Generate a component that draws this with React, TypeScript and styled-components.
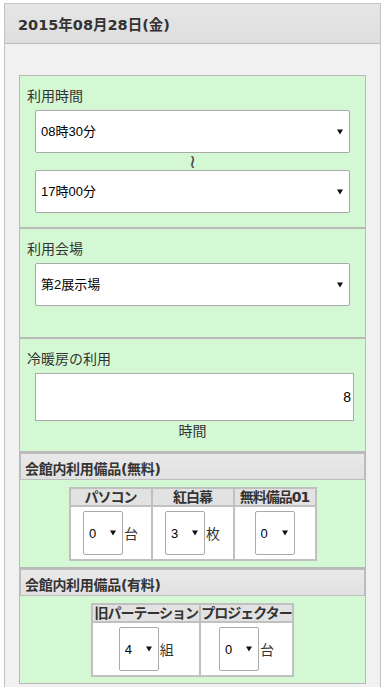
import React from "react";
import styled, { createGlobalStyle } from "styled-components";

const GlobalStyle = createGlobalStyle`
  html, body { margin: 0; padding: 0; background: #ffffff; }
  body { font-family: "Noto Sans CJK JP", "Noto Sans", sans-serif; color: #333; }
  * { box-sizing: border-box; }
`;

const Panel = styled.div`
  margin: 3px 3px 0 4px;
  border: 1px solid #c3c3c3;
  background: #f1f1f1;
`;

const PanelHeader = styled.div`
  height: 40px;
  display: flex;
  align-items: center;
  padding-left: 13px;
  background: linear-gradient(#e6e6e6, #dedede);
  border-bottom: 1px solid #bdbdbd;
  font-family: "DejaVu Sans", "Noto Sans CJK JP", sans-serif;
  font-weight: bold;
  font-size: 14.5px;
  color: #333;
`;

const PanelBody = styled.div`
  padding: 31px 14px 14px;
`;

const Section = styled.section<{ $pb?: number }>`
  border: 1px solid #b9b9b9;
  background: #d4f8d3;
  padding: 9px 7px ${(p) => p.$pb ?? 14}px;
`;

const Label = styled.div`
  font-size: 14px;
  line-height: 20px;
  color: #333;
  margin-bottom: 5px;
`;

const SelectWrap = styled.div<{ $w?: number }>`
  position: relative;
  margin: 0 8px;
  ${(p) => (p.$w ? `width: ${p.$w}px; flex: 0 0 ${p.$w}px; margin: 0;` : "")}
`;

const Select = styled.select<{ $h?: number }>`
  appearance: none;
  -webkit-appearance: none;
  display: block;
  width: 100%;
  height: ${(p) => p.$h ?? 43}px;
  margin: 0;
  padding: 0 5px;
  border: 1px solid #a9a9a9;
  border-radius: 2px;
  background: #fff;
  color: #000;
  font-family: "Liberation Sans", "Noto Sans CJK JP", sans-serif;
  font-size: 13px;
  outline: none;
`;

const Arrow = styled.svg`
  position: absolute;
  right: 7px;
  top: 50%;
  margin-top: -3px;
  pointer-events: none;
`;

const Wave = styled.div`
  height: 17px;
  line-height: 17px;
  text-align: center;
  font-family: "DejaVu Sans", sans-serif;
  font-size: 19px;
  color: #444;
  overflow: visible;
`;

const NumberInput = styled.input`
  display: block;
  width: calc(100% - 12px);
  margin: 0 4px 0 8px;
  height: 48px;
  padding: 0 2px 0 4px;
  border: 1px solid #a9a9a9;
  background: #fff;
  text-align: right;
  font-family: "Liberation Sans", sans-serif;
  font-size: 14px;
  color: #000;
  outline: none;
`;

const UnitCaption = styled.div`
  text-align: center;
  font-size: 14px;
  line-height: 18px;
  color: #333;
`;

const EquipSection = styled.section`
  border: 1px solid #b9b9b9;
  background: #d4f8d3;
`;

const EquipHeader = styled.div`
  height: 27px;
  border: 1px solid #bdbdbd;
  background: linear-gradient(#e9e9e9, #e1e1e1);
  padding: 3px 0 0 4px;
  display: flex;
  align-items: center;
  font-family: "DejaVu Sans", "Noto Sans CJK JP", sans-serif;
  font-weight: bold;
  font-size: 14px;
  color: #333;
  letter-spacing: -0.3px;
`;

const EquipBody = styled.div`
  padding: 7px 0 6px;
`;

const Table = styled.table`
  margin: 0 auto;
  border-collapse: separate;
  border-spacing: 0;
  border: 1px solid #c0c0c0;
  background: #fff;
`;

const Th = styled.th<{ $w: number }>`
  width: ${(p) => p.$w}px;
  min-width: ${(p) => p.$w}px;
  border: 1px solid #c0c0c0;
  background: #e2e2e2;
  padding: 0;
  height: 18px;
  line-height: 16px;
  white-space: nowrap;
  font-family: "DejaVu Sans", "Noto Sans CJK JP", sans-serif;
  font-weight: bold;
  font-size: 14px;
  letter-spacing: -1px;
  color: #333;
  text-align: center;
`;

const Td = styled.td`
  border: 1px solid #c0c0c0;
  padding: 4px 0;
  vertical-align: middle;
`;

const CellInner = styled.div`
  display: flex;
  justify-content: center;
  align-items: center;
`;

const Unit = styled.span`
  font-size: 14px;
  line-height: 20px;
  color: #333;
  width: 14px;
  margin-left: 1px;
`;

const ArrowIcon = () => (
  <Arrow width="6" height="6" viewBox="0 0 6 6">
    <polygon points="0,0.5 6,0.5 3,5.5" fill="#111" />
  </Arrow>
);

const BigSelect = ({ value }: { value: string }) => (
  <SelectWrap>
    <Select defaultValue={value}>
      <option value={value}>{value}</option>
    </Select>
    <ArrowIcon />
  </SelectWrap>
);

type Item = { name: string; value: string; unit?: string; w: number };

const EquipTable = ({ items }: { items: Item[] }) => (
  <Table>
    <thead>
      <tr>
        {items.map((it) => (
          <Th key={it.name} $w={it.w}>
            {it.name}
          </Th>
        ))}
      </tr>
    </thead>
    <tbody>
      <tr>
        {items.map((it) => (
          <Td key={it.name}>
            <CellInner>
              <SelectWrap $w={40}>
                <Select $h={44} defaultValue={it.value}>
                  <option value={it.value}>{it.value}</option>
                </Select>
                <ArrowIcon />
              </SelectWrap>
              {it.unit && <Unit>{it.unit}</Unit>}
            </CellInner>
          </Td>
        ))}
      </tr>
    </tbody>
  </Table>
);

const freeItems: Item[] = [
  { name: "パソコン", value: "0", unit: "台", w: 82 },
  { name: "紅白幕", value: "3", unit: "枚", w: 82 },
  { name: "無料備品01", value: "0", w: 82 },
];

const paidItems: Item[] = [
  { name: "旧パーテーション", value: "4", unit: "組", w: 108 },
  { name: "プロジェクター", value: "0", unit: "台", w: 90 },
];

export default function App() {
  return (
    <>
      <GlobalStyle />
      <Panel>
        <PanelHeader>2015年08月28日(金)</PanelHeader>
        <PanelBody>
          <Section>
            <Label>利用時間</Label>
            <BigSelect value="08時30分" />
            <Wave>≀</Wave>
            <BigSelect value="17時00分" />
          </Section>
          <Section $pb={31}>
            <Label>利用会場</Label>
            <BigSelect value="第2展示場" />
          </Section>
          <Section $pb={12}>
            <Label>冷暖房の利用</Label>
            <NumberInput type="text" defaultValue="8" />
            <UnitCaption>時間</UnitCaption>
          </Section>
          <EquipSection>
            <EquipHeader>会館内利用備品(無料)</EquipHeader>
            <EquipBody>
              <EquipTable items={freeItems} />
            </EquipBody>
          </EquipSection>
          <EquipSection>
            <EquipHeader>会館内利用備品(有料)</EquipHeader>
            <EquipBody>
              <EquipTable items={paidItems} />
            </EquipBody>
          </EquipSection>
        </PanelBody>
      </Panel>
    </>
  );
}
